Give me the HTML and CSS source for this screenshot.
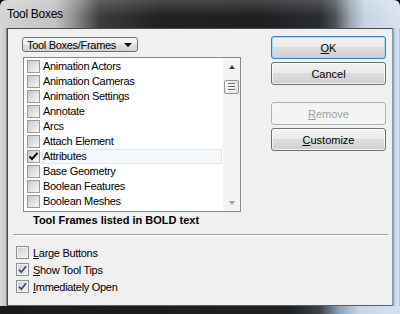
FILE: index.html
```html
<!DOCTYPE html>
<html lang="en">
<head>
  <meta charset="UTF-8">
  <title>Tool Boxes</title>
  <link rel="stylesheet" href="styles.css">
</head>
<body>
  <div class="window">
    <div class="titlebar"><span class="title">Tool Boxes</span></div>
    <div class="middle">
      <div class="side side-left"></div>
      <div class="client">
        <div class="top">
          <div class="left-col">
            <div class="combo">Tool Boxes/Frames<span class="combo-arrow"></span></div>
            <div class="listbox">
              <ul class="items">
                <li><span class="cb"></span><span class="label">Animation Actors</span></li>
                <li><span class="cb"></span><span class="label">Animation Cameras</span></li>
                <li><span class="cb"></span><span class="label">Animation Settings</span></li>
                <li><span class="cb"></span><span class="label">Annotate</span></li>
                <li><span class="cb"></span><span class="label">Arcs</span></li>
                <li><span class="cb"></span><span class="label">Attach Element</span></li>
                <li class="sel"><span class="cb"><svg width="11" height="11" viewBox="0 0 11 11"><path d="M1.5 5.5 L4 8 L9.5 1.8" stroke="#000" stroke-width="1.9" fill="none"/></svg></span><span class="label">Attributes</span></li>
                <li><span class="cb"></span><span class="label">Base Geometry</span></li>
                <li><span class="cb"></span><span class="label">Boolean Features</span></li>
                <li><span class="cb"></span><span class="label">Boolean Meshes</span></li>
              </ul>
              <div class="scrollbar">
                <span class="sb-btn"><span class="tri-up"></span></span>
                <span class="sb-thumb"><i></i><i></i><i></i></span>
                <span class="sb-btn sb-last"><span class="tri-down"></span></span>
              </div>
            </div>
            <div class="note">Tool Frames listed in BOLD text</div>
          </div>
          <div class="right-col">
            <button class="btn default"><u>O</u>K</button>
            <button class="btn">Cancel</button>
            <button class="btn disabled gap"><u>R</u>emove</button>
            <button class="btn"><u>C</u>ustomize</button>
          </div>
        </div>
        <div class="separator"></div>
        <div class="options">
          <div class="option"><span class="box"></span><span><u>L</u>arge Buttons</span></div>
          <div class="option"><span class="box"><svg width="9" height="9" viewBox="0 0 9 9"><path d="M1 4.6 L3.4 7.2 L8 1.2" stroke="#34467a" stroke-width="1.6" fill="none"/></svg></span><span><u>S</u>how Tool Tips</span></div>
          <div class="option"><span class="box"><svg width="9" height="9" viewBox="0 0 9 9"><path d="M1 4.6 L3.4 7.2 L8 1.2" stroke="#34467a" stroke-width="1.6" fill="none"/></svg></span><span><u>I</u>mmediately Open</span></div>
        </div>
      </div>
      <div class="side side-right"></div>
    </div>
    <div class="bottom"></div>
  </div>
</body>
</html>
```

FILE: styles.css
```css
body { margin: 0; background: #000; font-family: "Liberation Sans", Arial, sans-serif; font-size: 11px; letter-spacing: -0.3px; color: #000; }
.window { width: 400px; height: 314px; display: flex; flex-direction: column; }

.titlebar {
  height: 28px; display: flex; align-items: center; padding-left: 7px; box-sizing: border-box;
  border-radius: 6px 6px 0 0;
  background:
    linear-gradient(to bottom, rgba(255,255,255,0.18), rgba(255,255,255,0) 60%),
    linear-gradient(to right, #d4d4d4 0, #c2c2c2 55px, #8b8d8f 75px, #3a3c3e 100px, #1f2123 160px, #1c1e20 260px, #2a2d30 320px, #4b5055 335px, #9aa5b0 350px, #c6d5e3 365px, #d8e4ef 400px);
}
.title { font-size: 12px; color: #000; }

.middle { display: flex; height: 278px; }
.side { width: 7px; }
.side-left { background: linear-gradient(to right, #d9d9d9, #c8c8c8 80%, #6a6a6a); }
.side-right { background: linear-gradient(to right, #7f95aa, #c4d6e8 25%, #d6e4f1 80%, #9fb3c6); }
.client {
  flex: 1; background: #f0f0f0; display: flex; flex-direction: column;
  border: 1px solid; border-color: #4a4a4a #8496a8 #55606b #4a4a4a;
}
.bottom { height: 8px; background: linear-gradient(to right, #1a1a1a 0, #1e2022 290px, #3c4248 320px, #8ea6bd 340px, #c4d8ea 360px, #d3e2f0 400px); }

.top { display: flex; padding-top: 8px; }
.left-col { margin-left: 14px; width: 227px; }

.combo {
  display: flex; align-items: center; width: 116px; height: 15px; box-sizing: border-box;
  border: 1px solid #707070; border-radius: 3px; padding-left: 4px;
  background: linear-gradient(#f6f6f6 0, #ececec 50%, #dedede 50%, #d2d2d2 100%);
}
.combo-arrow { margin-left: 8px; border-style: solid; border-width: 4px 4px 0; border-color: #000 transparent transparent; }

.listbox {
  margin: 5px 0 0 1px; width: 218px; height: 155px; box-sizing: border-box;
  border: 1px solid #828790; background: #fff; display: flex;
}
.items { list-style: none; margin: 0; padding: 1px 0 0; flex: 1; }
.items li { height: 15px; display: flex; align-items: center; padding-left: 3px; }
.cb {
  width: 13px; height: 13px; box-sizing: border-box; margin-right: 2px; flex: none;
  border: 1px solid #9a9a9a; background: linear-gradient(135deg, #c8c8c8, #f7f7f7);
  display: flex; align-items: center; justify-content: center;
}
.label { flex: 1; height: 15px; line-height: 15px; padding-left: 1px; margin-right: 1px; box-sizing: border-box; }
.sel .label { border: 1px solid #dfe7f1; background: #f6f9fc; line-height: 13px; padding-left: 0; }

.scrollbar { width: 17px; background: #f4f4f4; display: flex; flex-direction: column; align-items: center; }
.sb-btn { height: 17px; width: 17px; display: flex; align-items: center; justify-content: center; }
.sb-last { margin-top: auto; }
.tri-up { border-style: solid; border-width: 0 3.5px 4px; border-color: transparent transparent #404040; }
.tri-down { border-style: solid; border-width: 4px 3.5px 0; border-color: #a0a0a0 transparent transparent; }
.sb-thumb {
  margin-top: 5px; width: 15px; height: 14px; box-sizing: border-box;
  border: 1px solid #959595; border-radius: 2px; background: linear-gradient(to right, #f3f3f3, #e2e2e2);
  display: flex; flex-direction: column; align-items: center; justify-content: center; gap: 1px;
}
.sb-thumb i { display: block; width: 7px; height: 1px; background: #6b6b6b; border-bottom: 1px solid #fff; }

.note { font-weight: bold; letter-spacing: 0; height: 14px; line-height: 14px; margin-top: 1px; padding-left: 11px; }

.right-col { margin-left: auto; margin-right: 6px; margin-top: -1px; width: 115px; display: flex; flex-direction: column; }
.btn {
  height: 23px; box-sizing: border-box; padding: 0; font: inherit; color: #000;
  border: 1px solid #707070; border-radius: 3px;
  background: linear-gradient(#f2f2f2 0, #ebebeb 45%, #dddddd 50%, #cfcfcf 100%);
  box-shadow: inset 0 0 0 1px rgba(255,255,255,0.7);
}
.btn + .btn { margin-top: 3px; }
.btn.gap { margin-top: 17px; }
.btn.default { border-color: #3c7fb1; box-shadow: inset 0 0 0 1px #a7dcf5; }
.btn.disabled { border-color: #adb2b5; background: #f4f4f4; color: #a0a0a0; box-shadow: none; }

.separator { margin: 7px 4px 0 5px; border-top: 1px solid #a0a0a0; border-bottom: 1px solid #fff; }

.options { margin-top: 8px; padding-left: 8px; }
.option { display: flex; align-items: center; height: 17px; }
.box {
  width: 13px; height: 13px; box-sizing: border-box; margin-right: 4px; flex: none;
  border: 1px solid #8e8f8f; background: linear-gradient(135deg, #cbced4, #f4f4f4);
  box-shadow: inset 0 0 0 1px #f2f2f2;
  display: flex; align-items: center; justify-content: center;
}
```
